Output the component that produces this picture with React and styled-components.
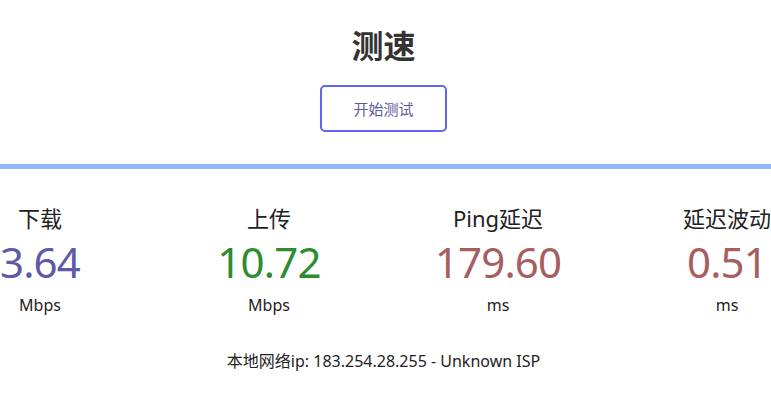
import React from "react";
import styled, { createGlobalStyle } from "styled-components";

const Global = createGlobalStyle`
  html, body { margin: 0; padding: 0; background: #fff; }
  body { font-family: "Noto Sans", "Noto Sans CJK SC", sans-serif; overflow: hidden; }
`;

const Page = styled.div`
  width: 767px;
  display: flex;
  flex-direction: column;
  align-items: center;
`;

const Header = styled.div`
  display: flex;
  flex-direction: column;
  align-items: center;
  padding-top: 24px;
`;

const Title = styled.h1`
  margin: 0;
  font-family: "Noto Sans CJK SC", sans-serif;
  font-size: 32px;
  font-weight: 700;
  line-height: 40px;
  color: #333;
`;

const StartButton = styled.button`
  margin-top: 21px;
  width: 127px;
  height: 47px;
  border: 2px solid #6363f2;
  border-radius: 5px;
  background: #fff;
  color: #5e5a9e;
  font-family: "Noto Sans CJK SC", sans-serif;
  font-size: 15px;
  cursor: pointer;
`;

const Bar = styled.div`
  align-self: stretch;
  width: 771px;
  height: 5px;
  margin-top: 32px;
  background: #93b6f7;
`;

const Stats = styled.div`
  align-self: stretch;
  display: flex;
  justify-content: center;
  margin-top: 34px;
`;

const Stat = styled.div`
  flex: 0 0 229px;
  display: flex;
  flex-direction: column;
  align-items: center;
`;

const Label = styled.div`
  font-size: 22px;
  line-height: 30px;
  color: #222;
`;

const Value = styled.div`
  font-size: 42px;
  line-height: 57px;
  letter-spacing: -0.8px;
  color: ${(p) => p.$color};
`;

const Unit = styled.div`
  margin-top: 3px;
  font-size: 16px;
  line-height: 24px;
  color: #222;
`;

const Info = styled.div`
  margin-top: 32px;
  font-size: 16px;
  line-height: 24px;
  color: #222;
`;

const stats = [
  { label: "下载", value: "3.64", unit: "Mbps", color: "#5d5aa8" },
  { label: "上传", value: "10.72", unit: "Mbps", color: "#2c8c2f" },
  { label: "Ping延迟", value: "179.60", unit: "ms", color: "#a65e5e" },
  { label: "延迟波动", value: "0.51", unit: "ms", color: "#a65e5e" },
];

export default function App() {
  return (
    <Page>
      <Global />
      <Header>
        <Title>测速</Title>
        <StartButton>开始测试</StartButton>
      </Header>
      <Bar />
      <Stats>
        {stats.map((s) => (
          <Stat key={s.label}>
            <Label>{s.label}</Label>
            <Value $color={s.color}>{s.value}</Value>
            <Unit>{s.unit}</Unit>
          </Stat>
        ))}
      </Stats>
      <Info>本地网络ip: 183.254.28.255 - Unknown ISP</Info>
    </Page>
  );
}
